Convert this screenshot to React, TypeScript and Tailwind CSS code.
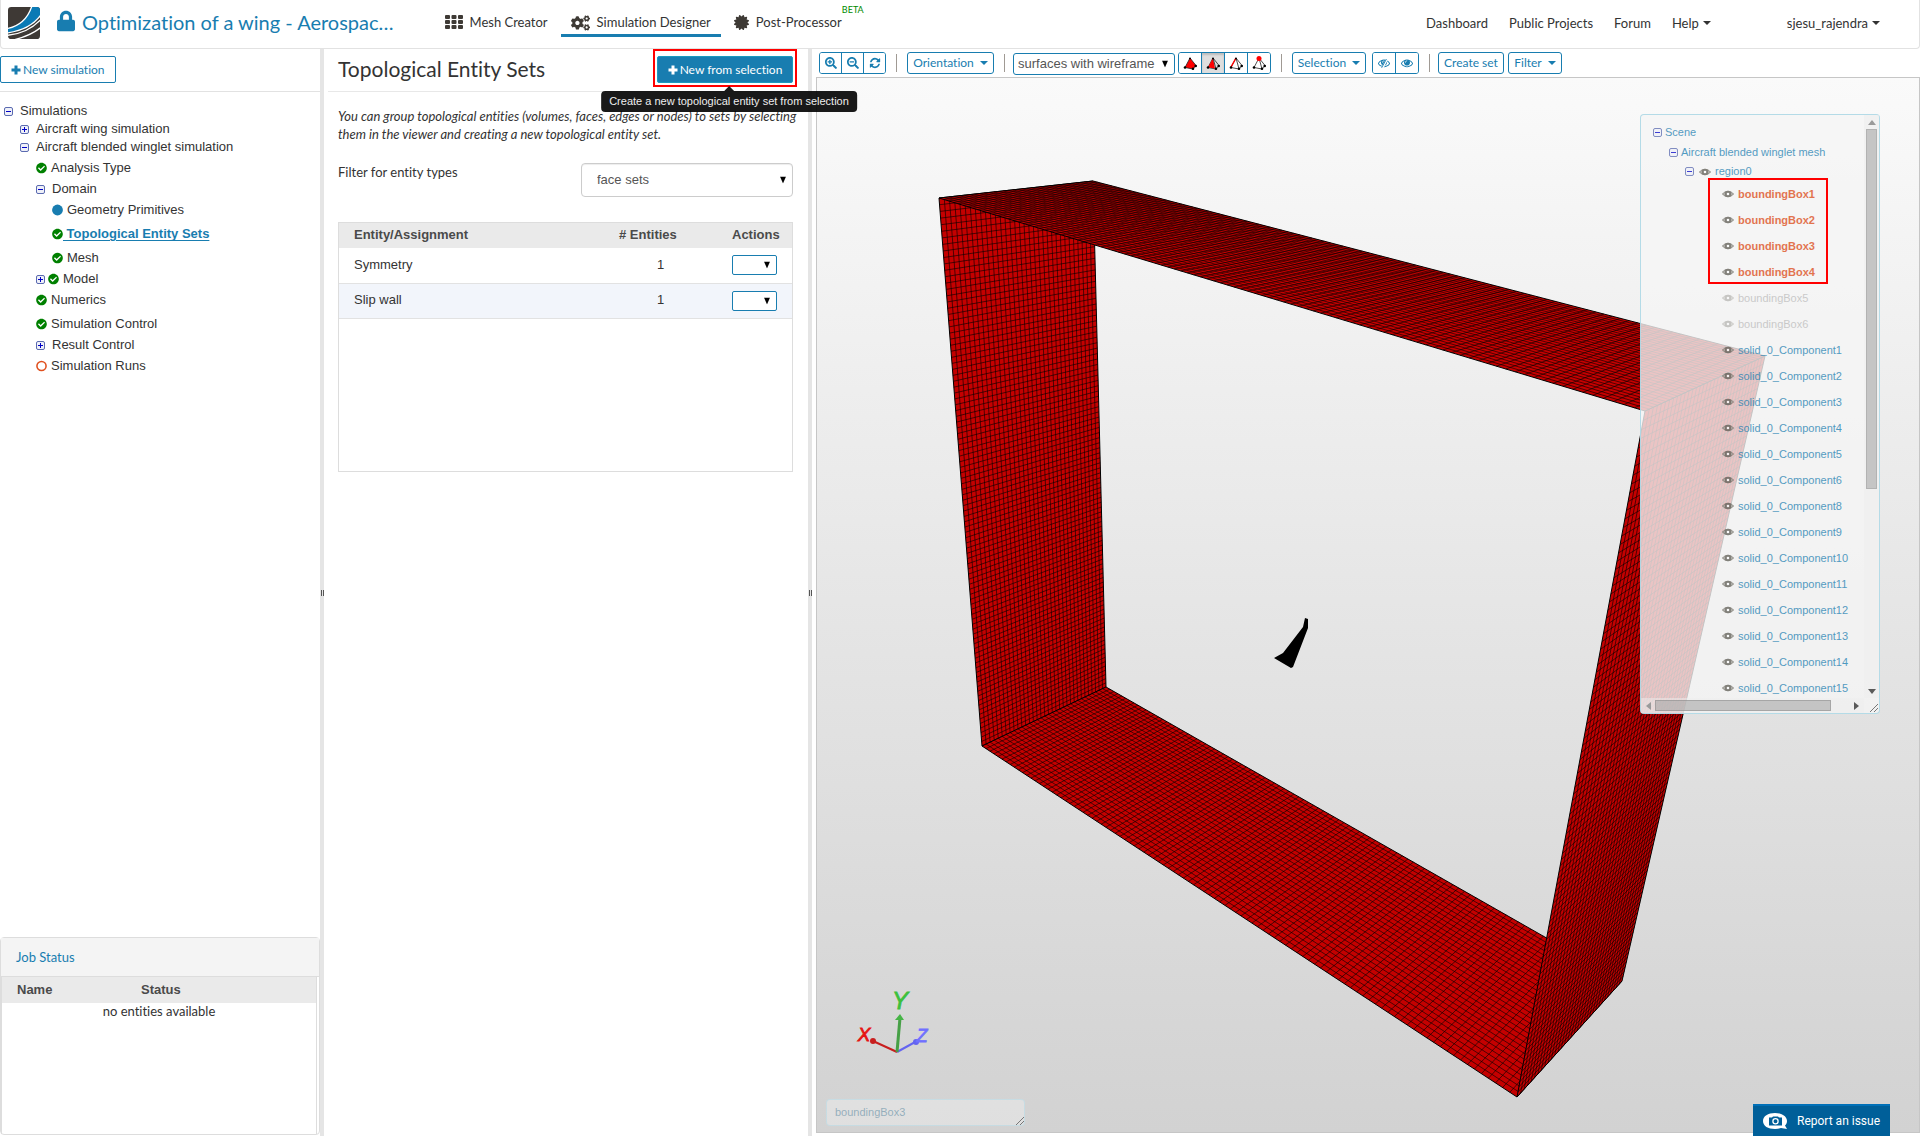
import type { ReactNode } from "react";
import { FaCertificate, FaCheckCircle, FaCogs, FaLock, FaSearchMinus, FaSearchPlus } from "react-icons/fa";

type Point = [number, number];

/* ---------- icons ---------- */

function Caret() {
  return (
    <svg viewBox="0 0 8 4" className="h-1 w-2 shrink-0" aria-hidden="true">
      <path d="M0 0h8L4 4z" fill="currentColor" />
    </svg>
  );
}

function SelectArrow() {
  return (
    <svg viewBox="0 0 6 7" className="pointer-events-none absolute top-1/2 right-[7px] h-[7px] w-[6px] -translate-y-1/2" aria-hidden="true">
      <path d="M0 0h6L3 7z" fill="#000" />
    </svg>
  );
}

function PlusIcon() {
  return (
    <svg viewBox="0 0 10 10" className="h-[10px] w-[10px] shrink-0" aria-hidden="true">
      <path d="M5 0.500V9.500M0.500 5H9.500" stroke="currentColor" strokeWidth="3" />
    </svg>
  );
}

function Logo() {
  return (
    <svg viewBox="0 0 96 96" className="h-8 w-8 shrink-0" role="img" aria-label="Home">
      <defs>
        <clipPath id="logo-shape">
          <rect width="96" height="96" rx="10" />
        </clipPath>
      </defs>
      <g clipPath="url(#logo-shape)">
        <rect width="96" height="96" fill="#3e3935" />
        <path d="M-4 65C34 58 60 34 72 -4H100V22C78 54 44 72 -4 78Z" fill="#0a7ab5" stroke="#fff" strokeWidth="4" />
        <path d="M-4 85C40 82 76 62 100 36" fill="none" stroke="#fff" strokeWidth="4" />
        <path d="M20 98C50 90 78 78 100 60" fill="none" stroke="#fff" strokeWidth="4" />
      </g>
    </svg>
  );
}

function GridIcon() {
  return (
    <svg viewBox="0 0 18 14" className="h-[14px] w-[18px]" fill="#3e3a35" aria-hidden="true">
      {[0, 5, 10].map((y) => [0, 6.5, 13].map((x) => <rect key={`${x}-${y}`} x={x} y={y} width="5" height="4" rx="1" />))}
    </svg>
  );
}

const EYE_PATH =
  "M1664 960q-152-236-381-353 61 104 61 225 0 185-131.5 316.5t-316.5 131.5-316.5-131.5-131.5-316.5q0-121 61-225-229 117-381 353 133 205 333.5 326.5t434.5 121.5 434.5-121.5 333.5-326.5zm-720-384q0-20-14-34t-34-14q-125 0-214.5 89.5t-89.5 214.5q0 20 14 34t34 14 34-14 14-34q0-86 61-147t147-61q20 0 34-14t14-34zm848 384q0 34-20 69-140 230-376.5 368.5t-499.5 138.5-499.5-139-376.5-368q-20-35-20-69t20-69q140-229 376.5-368t499.5-139 499.5 139 376.5 368q20 35 20 69z";

function EyeIcon({ slashed = false }: { slashed?: boolean }) {
  return (
    <svg viewBox="0 0 1792 1792" className="h-3 w-3" fill="currentColor" aria-hidden="true">
      <path d={EYE_PATH} />
      {slashed && (
        <>
          <path d="M1360 300L640 1620" stroke="#fff" strokeWidth="330" />
          <path d="M1260 300L540 1620" stroke="currentColor" strokeWidth="130" />
        </>
      )}
    </svg>
  );
}

function RefreshIcon() {
  return (
    <svg viewBox="0 0 1792 1792" className="h-3 w-3" fill="currentColor" aria-hidden="true">
      <path d="M1639 1056q0 5-1 7-64 268-268 434.5t-478 166.5q-146 0-282.5-55t-243.5-157l-129 129q-19 19-45 19t-45-19-19-45v-448q0-26 19-45t45-19h448q26 0 45 19t19 45-19 45l-137 137q71 66 161 102t187 36q134 0 250-65t186-179q11-17 53-117 8-23 30-23h192q13 0 22.5 9.5t9.5 22.5zm25-800v448q0 26-19 45t-45 19h-448q-26 0-45-19t-19-45 19-45l138-138q-148-137-349-137-134 0-250 65t-186 179q-11 17-53 117-8 23-30 23h-199q-13 0-22.5-9.5t-9.5-22.5v-7q65-268 270-434.5t480-166.5q146 0 284 55.5t245 156.5l130-129q19-19 45-19t45 19 19 45z" />
    </svg>
  );
}

function TetraIcon({ kind }: { kind: "volume" | "face" | "edge" | "node" }) {
  return (
    <svg viewBox="0 0 14 14" className="h-[14px] w-[14px]" aria-hidden="true">
      <path d="M7 2L2 11.500L10 13L13 9.500Z" fill={kind === "volume" ? "#f00" : "none"} stroke="#222" strokeWidth="0.800" />
      {kind === "face" && <path d="M7 2L2 11.500L9 12.500Z" fill="#f00" />}
      <path d="M7 2L10 13" stroke={kind === "volume" ? "#f00" : "#222"} strokeWidth="0.800" />
      {kind === "edge" && <path d="M7 2L2 11" stroke="#f00" strokeWidth="1.500" />}
      <circle cx="2" cy="11.500" r="1.300" fill="#000" />
      <circle cx="10" cy="12.700" r="1.300" fill="#000" />
      <circle cx="12.700" cy="10" r="1.300" fill="#000" />
      <circle cx="7" cy="2.500" r={kind === "node" ? 2.5 : 1} fill={kind === "node" ? "#f00" : "#000"} />
    </svg>
  );
}

function ToggleIcon({ open }: { open: boolean }) {
  return (
    <svg viewBox="0 0 9 9" className="h-[9px] w-[9px] shrink-0" aria-hidden="true">
      <rect x="0.500" y="0.500" width="8" height="8" rx="1.500" fill="#eef0f8" stroke="#5a6ab0" />
      <path d={open ? "M2 4.500h5" : "M2 4.500h5M4.500 2v5"} stroke="#0000c8" strokeWidth="1" />
    </svg>
  );
}

function SceneEye() {
  return (
    <svg viewBox="0 0 12 8" className="h-2 w-3 shrink-0" aria-hidden="true">
      <path d="M0.500 4C3 0.500 9 0.500 11.500 4C9 7.500 3 7.500 0.500 4Z" fill="#a8a6a0" stroke="#6a685f" strokeWidth="1" />
      <circle cx="6" cy="4" r="2.300" fill="#fff" stroke="#5c5a52" strokeWidth="2" />
    </svg>
  );
}

function ResizeGrip() {
  return (
    <svg viewBox="0 0 8 8" className="h-2 w-2" aria-hidden="true">
      <path d="M0 8L8 0M4 8L8 4" stroke="#777" strokeWidth="1" />
    </svg>
  );
}

/* ---------- 3D viewer ---------- */

/** Maps the unit square onto a quadrilateral with correct perspective. */
function projector([p0, p1, p2, p3]: Point[]) {
  const dx1 = p1[0] - p2[0];
  const dx2 = p3[0] - p2[0];
  const dy1 = p1[1] - p2[1];
  const dy2 = p3[1] - p2[1];
  const sx = p0[0] - p1[0] + p2[0] - p3[0];
  const sy = p0[1] - p1[1] + p2[1] - p3[1];
  const det = dx1 * dy2 - dx2 * dy1;
  const g = (sx * dy2 - dx2 * sy) / det;
  const h = (dx1 * sy - sx * dy1) / det;
  const a = p1[0] - p0[0] + g * p1[0];
  const b = p3[0] - p0[0] + h * p3[0];
  const d = p1[1] - p0[1] + g * p1[1];
  const e = p3[1] - p0[1] + h * p3[1];
  return (u: number, v: number): Point => {
    const w = g * u + h * v + 1;
    return [(a * u + b * v + p0[0]) / w, (d * u + e * v + p0[1]) / w];
  };
}

function MeshFace({ corners, columns, rows, line }: { corners: Point[]; columns: number; rows: number; line: number }) {
  const project = projector(corners);
  const segment = (from: Point, to: Point) => `M${from[0].toFixed(1)} ${from[1].toFixed(1)}L${to[0].toFixed(1)} ${to[1].toFixed(1)}`;
  let grid = "";
  for (let i = 1; i < columns; i++) grid += segment(project(i / columns, 0), project(i / columns, 1));
  for (let j = 1; j < rows; j++) grid += segment(project(0, j / rows), project(1, j / rows));
  return (
    <g>
      <polygon points={corners.map((c) => c.join(",")).join(" ")} fill="#c40000" stroke="#000" strokeWidth="1" />
      <path d={grid} stroke="#000" strokeWidth={line} fill="none" />
    </g>
  );
}

const TOP_FRONT_LEFT: Point = [939, 198];
const TOP_BACK_LEFT: Point = [1093, 181];
const TOP_BACK_RIGHT: Point = [1765, 356];
const TOP_FRONT_RIGHT: Point = [1645, 411];
const LOW_FRONT_LEFT: Point = [982, 746];
const LOW_BACK_LEFT: Point = [1106, 687];
const LOW_BACK_RIGHT: Point = [1622, 981];
const LOW_FRONT_RIGHT: Point = [1517, 1097];

function MeshScene() {
  return (
    <svg viewBox="817 78 1102 1054" preserveAspectRatio="xMidYMid slice" className="block h-full w-full" role="img" aria-label="Wing mesh inside its bounding box">
      <MeshFace corners={[TOP_FRONT_LEFT, TOP_BACK_LEFT, LOW_BACK_LEFT, LOW_FRONT_LEFT]} columns={33} rows={100} line={0.6} />
      <MeshFace corners={[LOW_FRONT_LEFT, LOW_BACK_LEFT, LOW_BACK_RIGHT, LOW_FRONT_RIGHT]} columns={33} rows={100} line={0.6} />
      <MeshFace corners={[TOP_FRONT_RIGHT, TOP_BACK_RIGHT, LOW_BACK_RIGHT, LOW_FRONT_RIGHT]} columns={33} rows={100} line={0.6} />
      <MeshFace corners={[TOP_FRONT_LEFT, TOP_BACK_LEFT, TOP_BACK_RIGHT, TOP_FRONT_RIGHT]} columns={33} rows={100} line={0.6} />
      <path d="M1305 618L1308 619L1308 628L1293 667L1291 668L1274 658L1283 653L1303 627Z" fill="#000" />
      <g strokeWidth="2" fill="none">
        <path d="M897 1052L873 1041" stroke="#c81e1e" />
        <path d="M897 1052L917 1041" stroke="#6464f0" />
        <path d="M897 1052L900 1018" stroke="#46a046" strokeWidth="3" />
      </g>
      <circle cx="873" cy="1041" r="3" fill="#c81e1e" />
      <circle cx="916" cy="1042" r="3" fill="#6464f0" />
      <path d="M895 1020L900 1014L904 1020Z" fill="#46b446" />
      <g fontFamily='"Liberation Sans", Arial, sans-serif' fontStyle="italic" textAnchor="middle" strokeWidth="0.800">
        <text x="900" y="1009" fontSize="24" fill="#3cc03c" stroke="#3cc03c">Y</text>
        <text x="864" y="1041" fontSize="19" fill="#e61414" stroke="#e61414">X</text>
        <text x="922" y="1042" fontSize="18" fill="#7070ff" stroke="#7070ff">Z</text>
      </g>
    </svg>
  );
}

/* ---------- header ---------- */

function Header() {
  return (
    <header className="flex h-[49px] shrink-0 items-start rounded-b border border-t-0 border-[#e2e2e2] bg-white pl-[7px] text-[13px] leading-5 text-[#333]">
      <a href="#home" className="pt-[7px]">
        <Logo />
      </a>
      <h1 className="ml-[17px] flex items-center pt-[6px] text-[20px] leading-8 text-[#187db0]">
        <FaLock className="mr-[7px] mb-[2px] h-[22px] w-[18px]" />
        <a href="#project">Optimization of a wing - Aerospac…</a>
      </h1>
      <nav className="ml-[41px] flex h-9 pt-3" aria-label="Workspaces">
        <a href="#mesh" className="flex h-6 gap-[7px] px-[10px]">
          <span className="pt-[3px]">
            <GridIcon />
          </span>
          Mesh Creator
        </a>
        <a href="#simulation" aria-current="page" className="ml-[3px] flex h-[25px] gap-[7px] border-b-[3px] border-[#187db0] px-[10px]">
          <FaCogs className="mt-[2px] h-[18px] w-[19px] text-[#3e3a35]" />
          Simulation Designer
        </a>
        <a href="#post" className="relative ml-[3px] flex h-6 gap-[7px] px-[10px]">
          <FaCertificate className="mt-[3px] h-[15px] w-[15px] text-[#3e3a35]" />
          Post-Processor
          <span className="absolute -top-2 right-[-12px] text-[9px] leading-3 text-[#008a00]">BETA</span>
        </a>
      </nav>
      <nav className="mr-[39px] ml-auto flex pt-[13px]" aria-label="Account">
        <a href="#dashboard">Dashboard</a>
        <a href="#projects" className="ml-[21px]">Public Projects</a>
        <a href="#forum" className="ml-[21px]">Forum</a>
        <button type="button" className="ml-[21px] flex items-center gap-1">
          Help <Caret />
        </button>
        <button type="button" className="ml-[76px] flex items-center gap-1">
          sjesu_rajendra <Caret />
        </button>
      </nav>
    </header>
  );
}

/* ---------- simulation tree ---------- */

type Status = "done" | "info" | "open";
type Node = { label: string; depth: string; toggle?: "open" | "closed"; status?: Status; active?: boolean };

const NODES: Node[] = [
  { label: "Simulations", depth: "pl-1", toggle: "open" },
  { label: "Aircraft wing simulation", depth: "pl-5", toggle: "closed" },
  { label: "Aircraft blended winglet simulation", depth: "pl-5", toggle: "open" },
  { label: "Analysis Type", depth: "pl-9", status: "done" },
  { label: "Domain", depth: "pl-9", toggle: "open" },
  { label: "Geometry Primitives", depth: "pl-[52px]", status: "info" },
  { label: "Topological Entity Sets", depth: "pl-[52px]", status: "done", active: true },
  { label: "Mesh", depth: "pl-[52px]", status: "done" },
  { label: "Model", depth: "pl-9", toggle: "closed", status: "done" },
  { label: "Numerics", depth: "pl-9", status: "done" },
  { label: "Simulation Control", depth: "pl-9", status: "done" },
  { label: "Result Control", depth: "pl-9", toggle: "closed" },
  { label: "Simulation Runs", depth: "pl-9", status: "open" },
];

function StatusIcon({ status }: { status: Status }) {
  if (status === "done") return <FaCheckCircle className="h-3 w-[11px] shrink-0 text-[#008000]" />;
  return (
    <svg viewBox="0 0 12 12" className="h-3 w-[11px] shrink-0" aria-hidden="true">
      {status === "info" ? <circle cx="6" cy="6" r="5.900" fill="#187db0" /> : <circle cx="6" cy="6" r="5" fill="none" stroke="#e0501e" strokeWidth="1.700" />}
    </svg>
  );
}

function TreeRow({ node }: { node: Node }) {
  return (
    <li className={`flex items-center whitespace-nowrap ${node.depth} ${node.toggle ? "h-[18px]" : "h-6"}`}>
      {node.toggle && (
        <button type="button" aria-label={`Toggle ${node.label}`} className={node.status ? "mr-[3px]" : "mr-[7px]"}>
          <ToggleIcon open={node.toggle === "open"} />
        </button>
      )}
      {node.status && <StatusIcon status={node.status} />}
      <a
        href="#node"
        className={node.active ? "font-bold whitespace-pre text-[#187db0] underline underline-offset-2" : node.status ? "pl-1" : ""}
      >
        {node.active ? ` ${node.label}` : node.label}
      </a>
    </li>
  );
}

function Sidebar() {
  return (
    <aside className="flex w-80 shrink-0 flex-col">
      <div className="h-[43px] shrink-0 border-b border-[#e2e2e2] pt-[7px]">
        <button type="button" className="flex h-[27px] items-center gap-[2px] rounded-xs border border-[#187db0] px-[10px] text-[12px] text-[#187db0]">
          <PlusIcon /> New simulation
        </button>
      </div>
      <ul className="pt-[10px] font-['Liberation_Sans',Arial,sans-serif] text-[13px] text-[#333]">
        {NODES.map((node) => (
          <TreeRow key={node.label} node={node} />
        ))}
      </ul>
      <section className="mt-auto mb-px flex h-[198px] shrink-0 flex-col rounded border border-[#ddd]">
        <h2 className="h-[39px] shrink-0 border-b border-[#ddd] bg-[#f4f4f4] px-[15px] pt-[9px] text-[13px] leading-5 text-[#187db0]">
          <a href="#jobs">Job Status</a>
        </h2>
        <div className="mr-[2px] grow border-x border-[#ddd]">
          <table className="w-full text-left font-['Liberation_Sans',Arial,sans-serif] text-[13px]">
            <thead>
              <tr className="h-[26px] bg-[#eaeaea] text-[#4a4a4a]">
                <th className="w-[124px] pl-[15px] font-bold">Name</th>
                <th className="pl-[15px] font-bold">Status</th>
              </tr>
            </thead>
            <tbody>
              <tr>
                <td colSpan={2} className="text-center font-['Lato',sans-serif] text-[13px] leading-[17px] text-[#333]">
                  no entities available
                </td>
              </tr>
            </tbody>
          </table>
        </div>
      </section>
    </aside>
  );
}

function Splitter() {
  return (
    <div role="separator" aria-orientation="vertical" className="flex w-1 shrink-0 items-center justify-center gap-px bg-[#e5e5e5]">
      <span className="h-[6px] w-px bg-[#555]" />
      <span className="h-[6px] w-px bg-[#555]" />
    </div>
  );
}

/* ---------- entity sets ---------- */

const SETS = [
  { name: "Symmetry", count: 1 },
  { name: "Slip wall", count: 1 },
];

function EntitySets() {
  return (
    <main className="w-[484px] shrink-0 pl-1">
      <div className="flex h-[43px] items-start justify-between border-b border-[#e8e8e8] pr-[11px] pl-[10px]">
        <h2 className="pt-1 text-[21px] leading-8 text-[#333]">Topological Entity Sets</h2>
        <div className="relative border-2 border-[#f00] p-[2px] pt-[5px]">
          <button type="button" className="flex h-[27px] w-[136px] items-center justify-center gap-[2px] rounded-xs border border-[#1a9abf] bg-[#187db0] text-[12px] text-white">
            <PlusIcon /> New from selection
          </button>
          <div role="tooltip" className="absolute top-[35px] left-[74px] z-10 flex -translate-x-1/2 flex-col items-center">
            <svg viewBox="0 0 10 5" className="h-[5px] w-[10px]" aria-hidden="true">
              <path d="M0 5L5 0L10 5Z" fill="#1a1a1a" />
            </svg>
            <span className="rounded bg-black/90 px-2 py-[3px] font-['Liberation_Sans',Arial,sans-serif] text-[11px] leading-[15px] whitespace-nowrap text-[#eee]">
              Create a new topological entity set from selection
            </span>
          </div>
        </div>
      </div>
      <div className="pt-[15px] pr-[15px] pl-[10px]">
        <p className="-mr-3 text-[13px] leading-[18px] text-[#333] italic">
          You can group topological entities (volumes, faces, edges or nodes) to sets by selecting them in the viewer and creating a new topological entity set.
        </p>
        <div className="mt-5 flex items-start justify-between">
          <label htmlFor="entity-filter" className="text-[13px] leading-[18px] text-[#333]">
            Filter for entity types
          </label>
          <div className="relative">
            <select id="entity-filter" className="block h-[34px] w-[212px] appearance-none rounded border border-[#ccc] bg-white pl-[15px] font-['Liberation_Sans',Arial,sans-serif] text-[13px] text-[#555] shadow-[inset_0_1px_1px_rgba(0,0,0,0.075)]">
              <option>face sets</option>
            </select>
            <SelectArrow />
          </div>
        </div>
        <div className="mt-[25px] h-[250px] border border-[#ddd] font-['Liberation_Sans',Arial,sans-serif]">
          <table className="w-full text-left text-[13px] leading-4 text-[#333]">
            <thead>
              <tr className="h-[25px] bg-[#eaeaea] text-[#4a4a4a]">
                <th className="pb-px pl-[15px] font-bold">Entity/Assignment</th>
                <th className="w-[113px] pb-px font-bold"># Entities</th>
                <th className="w-[60px] pb-px font-bold">Actions</th>
              </tr>
            </thead>
            <tbody>
              {SETS.map((set) => (
                <tr key={set.name} className="h-[35px] border-b border-[#e2e2e2] even:bg-[#f2f5fb]">
                  <td className="pb-px pl-[15px]">{set.name}</td>
                  <td className="pb-px pl-[38px]">{set.count}</td>
                  <td>
                    <div className="relative w-[45px]">
                      <select aria-label={`Actions for ${set.name}`} className="block h-5 w-full appearance-none rounded-xs border border-[#187db0] bg-white">
                        <option></option>
                      </select>
                      <SelectArrow />
                    </div>
                  </td>
                </tr>
              ))}
            </tbody>
          </table>
        </div>
      </div>
    </main>
  );
}

/* ---------- viewer toolbar ---------- */

function ButtonGroup({ children, className }: { children: ReactNode; className: string }) {
  return <div className={`flex h-[22px] shrink-0 divide-x divide-[#187db0] overflow-hidden rounded-[3px] border border-[#187db0] ${className}`}>{children}</div>;
}

function ToolButton({ label, children, active = false }: { label: string; children: ReactNode; active?: boolean }) {
  return (
    <button type="button" aria-label={label} aria-pressed={active} className={`flex flex-1 items-center justify-center ${active ? "bg-[#dedede] shadow-[inset_0_2px_2px_rgba(0,0,0,0.15)]" : "bg-white"}`}>
      {children}
    </button>
  );
}

function MenuButton({ label, className, menu = true }: { label: string; className: string; menu?: boolean }) {
  return (
    <button type="button" className={`flex h-[22px] shrink-0 items-center justify-center gap-[6px] rounded-[3px] border border-[#187db0] bg-white text-[12px] whitespace-nowrap ${className}`}>
      {label}
      {menu && <Caret />}
    </button>
  );
}

function Divider({ className }: { className: string }) {
  return <span className={`mt-[2px] h-[18px] w-px shrink-0 bg-[#a09a94] ${className}`} />;
}

function Toolbar() {
  return (
    <div role="toolbar" aria-label="Viewer" className="flex h-7 shrink-0 items-start pt-[3px] pl-[7px] text-[#187db0]">
      <ButtonGroup className="w-[67px]">
        <ToolButton label="Zoom in"><FaSearchPlus className="h-3 w-3" /></ToolButton>
        <ToolButton label="Zoom out"><FaSearchMinus className="h-3 w-3" /></ToolButton>
        <ToolButton label="Reset view"><RefreshIcon /></ToolButton>
      </ButtonGroup>
      <Divider className="mx-[10px]" />
      <MenuButton label="Orientation" className="w-[87px]" />
      <Divider className="mr-2 ml-[10px]" />
      <div className="relative mt-px shrink-0">
        <select aria-label="Rendering mode" className="block h-[22px] w-[162px] appearance-none rounded-[3px] border border-[#187db0] bg-white pl-1 font-['Liberation_Sans',Arial,sans-serif] text-[13px] leading-5 text-[#555]">
          <option>surfaces with wireframe</option>
        </select>
        <SelectArrow />
      </div>
      <ButtonGroup className="ml-[3px] w-[93px]">
        <ToolButton label="Pick volumes"><TetraIcon kind="volume" /></ToolButton>
        <ToolButton label="Pick faces" active><TetraIcon kind="face" /></ToolButton>
        <ToolButton label="Pick edges"><TetraIcon kind="edge" /></ToolButton>
        <ToolButton label="Pick nodes"><TetraIcon kind="node" /></ToolButton>
      </ButtonGroup>
      <Divider className="mx-[10px]" />
      <MenuButton label="Selection" className="w-[74px]" />
      <ButtonGroup className="ml-[6px] w-[47px]">
        <ToolButton label="Hide selection"><EyeIcon slashed /></ToolButton>
        <ToolButton label="Show all"><EyeIcon /></ToolButton>
      </ButtonGroup>
      <Divider className="mr-2 ml-[10px]" />
      <MenuButton label="Create set" className="w-[66px]" menu={false} />
      <MenuButton label="Filter" className="ml-1 w-[54px]" />
    </div>
  );
}

/* ---------- scene tree ---------- */

const SELECTED = ["boundingBox1", "boundingBox2", "boundingBox3", "boundingBox4"];
const HIDDEN = ["boundingBox5", "boundingBox6"];
const SOLIDS = [1, 2, 3, 4, 5, 6, 8, 9, 10, 11, 12, 13, 14, 15].map((n) => `solid_0_Component${n}`);

function SceneItem({ label, tone }: { label: string; tone: string }) {
  return (
    <li className={`flex h-[26px] items-center gap-1 pl-[81px] ${tone}`}>
      <SceneEye />
      <a href="#item">{label}</a>
    </li>
  );
}

function ScrollArrow({ d, faded = false }: { d: string; faded?: boolean }) {
  return (
    <svg viewBox="0 0 8 8" className="h-2 w-2 shrink-0" aria-hidden="true">
      <path d={d} fill={faded ? "#9a9a9a" : "#5a5a5a"} />
    </svg>
  );
}

function SceneTree() {
  return (
    <section aria-label="Scene" className="absolute top-9 right-[39px] grid h-[600px] w-[240px] grid-cols-[1fr_15px] grid-rows-[1fr_15px] rounded border border-[#add8e6]/90 bg-[#f5f5f5]/80 font-['Liberation_Sans',Arial,sans-serif] text-[11px] text-[#187db0]">
      <div className="min-h-0 overflow-hidden">
        <ul className="pt-2 whitespace-nowrap">
          <li className="flex h-[19px] items-center gap-[3px] pl-3 opacity-75">
            <ToggleIcon open /> <a href="#scene">Scene</a>
          </li>
          <li className="flex h-5 items-center gap-[3px] pl-7 opacity-75">
            <ToggleIcon open /> <a href="#mesh">Aircraft blended winglet mesh</a>
          </li>
          <li className="flex h-[19px] items-center pl-11 opacity-75">
            <ToggleIcon open />
            <span className="mr-1 ml-[5px]">
              <SceneEye />
            </span>
            <a href="#region">region0</a>
          </li>
          <li className="relative">
            <ul>
              {SELECTED.map((label) => (
                <SceneItem key={label} label={label} tone="font-bold text-[#dc4a14] opacity-75" />
              ))}
            </ul>
            <span className="pointer-events-none absolute -top-[3px] left-[67px] h-[106px] w-[120px] border-2 border-[#f00]" />
          </li>
          {HIDDEN.map((label) => (
            <SceneItem key={label} label={label} tone="text-[#666] opacity-30" />
          ))}
          {SOLIDS.map((label) => (
            <SceneItem key={label} label={label} tone="opacity-75" />
          ))}
        </ul>
      </div>
      <div className="flex flex-col items-center bg-[#eee]/60 pt-1 pb-[3px]">
        <ScrollArrow d="M0 6h8L4 1z" faded />
        <span className="mt-[2px] h-[360px] w-[11px] border border-[#aaa]/70 bg-[#c0c0c0]/90" />
        <span className="mt-auto">
          <ScrollArrow d="M0 2h8L4 7z" />
        </span>
      </div>
      <div className="flex items-center bg-[#eee]/50 pr-1 pl-1">
        <ScrollArrow d="M6 0v8L1 4z" faded />
        <span className="ml-[2px] h-[11px] w-[176px] border border-[#888]/50 bg-[#999]/50" />
        <span className="ml-auto">
          <ScrollArrow d="M2 0v8L7 4z" />
        </span>
      </div>
      <div className="flex items-end justify-end p-px">
        <ResizeGrip />
      </div>
    </section>
  );
}

function Viewer() {
  return (
    <section className="flex min-w-0 grow flex-col pb-[3px]">
      <Toolbar />
      <div className="relative ml-1 min-h-0 grow overflow-hidden border border-[#c6c6c6] bg-linear-to-b from-[#fafafa] to-[#d2d2d2]">
        <MeshScene />
        <SceneTree />
        <div className="absolute bottom-[6px] left-[9px] flex h-[27px] w-[199px] items-center rounded border border-[#add8e6]/50 bg-white/30 pl-2 font-['Liberation_Sans',Arial,sans-serif] text-[11px] text-[#5f8ba3]/60">
          boundingBox3
          <span className="mt-auto ml-auto">
            <ResizeGrip />
          </span>
        </div>
      </div>
    </section>
  );
}

function ReportButton() {
  return (
    <button type="button" className="fixed right-[30px] bottom-0 flex h-8 w-[137px] items-center border-t-2 border-[#0070b8] bg-[#005f99] pl-[10px] font-['Roboto',sans-serif] text-[12px] text-white">
      <svg viewBox="0 0 24 16" className="mr-[10px] h-4 w-6 shrink-0" aria-hidden="true">
        <path d="M12 0C18.500 0 24 3 24 8C24 10 23 11.500 22 12.500L24 16L18 15C16 15.700 14 16 12 16C5 16 0 13 0 8C0 3 5 0 12 0Z" fill="#fff" />
        <path d="M6 4.500H9L10 3.500H15L16 4.500H19V12.500H6Z" fill="#005f99" />
        <circle cx="12.500" cy="8.300" r="2.600" fill="none" stroke="#fff" strokeWidth="1.300" />
      </svg>
      Report an issue
    </button>
  );
}

export default function App() {
  return (
    <div className="flex h-screen flex-col overflow-hidden bg-white font-['Lato',sans-serif] [font-variant-ligatures:none]">
      <Header />
      <div className="flex min-h-0 grow">
        <Sidebar />
        <Splitter />
        <EntitySets />
        <Splitter />
        <Viewer />
      </div>
      <ReportButton />
    </div>
  );
}
